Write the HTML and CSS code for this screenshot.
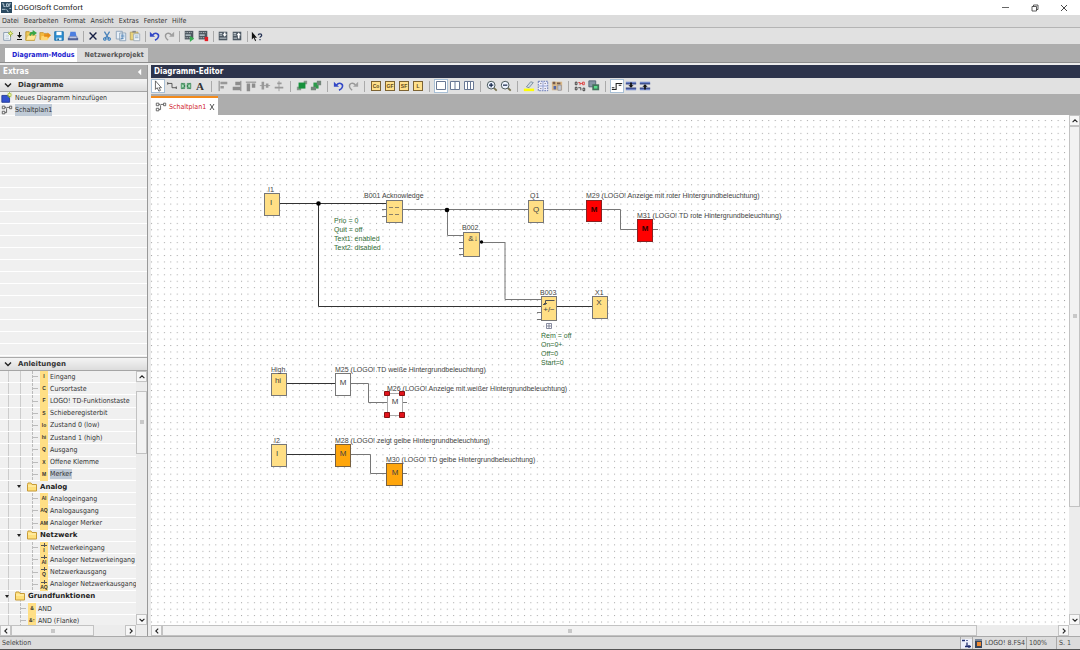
FILE: index.html
```html
<!DOCTYPE html>
<html lang="de">
<head>
<meta charset="utf-8">
<title>LOGO!Soft Comfort</title>
<link rel="stylesheet" href="styles.css">
</head>
<body>
<svg class="defs" aria-hidden="true">
  <symbol id="new" viewBox="0 0 14 14"><path d="M2 3h6l2 2v7H2z" fill="#f4f8fc" stroke="#7f93a8"/><path d="M4 6h4M4 8h4M4 10h4" stroke="#b9c8d6"/><path d="M10 1v7M7 4h6M8 2l4 4M12 2L8 6" stroke="#8fae1c"/><circle cx="10" cy="4" r="1.3" fill="#fbf59a"/></symbol>
  <symbol id="drop" viewBox="0 0 7 14"><path d="M3 3h1v3h2L3.500 9 1 6h2zM1 10h5v1H1z" fill="#111"/></symbol>
  <symbol id="open" viewBox="0 0 14 14"><path d="M1 2h4l1 1h5v9H1z" fill="#f1ca5c" stroke="#b58c25"/><path d="M3 6h10l-2 6H1z" fill="#ffe797" stroke="#c09a35" stroke-width=".6"/><path d="M5 6c0-3 2-4 4-4V0l5 3.500L9 7V5C8 5 7 5 7 7z" fill="#39a747"/></symbol>
  <symbol id="close" viewBox="0 0 14 14"><path d="M1 3h4l1 1h4v3L8 11H1z" fill="#f3b83e" stroke="#b98320" stroke-width=".7"/><path d="M3 7h10l-3 5H2z" fill="#ffd672"/><path d="M6 5h4V3l4 3-4 4V8H6z" fill="#e68a15"/></symbol>
  <symbol id="save" viewBox="0 0 14 14"><path d="M2 2h10v10H2z" fill="#2d8fd2" stroke="#146aa9"/><path d="M4 2h6v4H4z" fill="#fff"/><path d="M4 9h6v3H4z" fill="#d9effa"/><path d="M5 10h2v2H5z" fill="#235c88"/></symbol>
  <symbol id="print" viewBox="0 0 14 14"><path d="M4 2h6l1 5H3z" fill="#4d7fe0"/><path d="M2 7h10v4H2z" fill="#8a98c4"/><path d="M1 9h12v3H1z" fill="#526397"/><path d="M3 9h8" stroke="#dce4fb"/></symbol>
  <symbol id="del" viewBox="0 0 14 14"><path d="M3 3l8 8M11 3l-8 8" stroke="#172044" stroke-width="1.600"/></symbol>
  <symbol id="cut" viewBox="0 0 14 14"><path d="M4 2l5 8M10 2L5 10" stroke="#4b83b9" stroke-width="1.500"/><circle cx="4.500" cy="10.500" r="1.500" fill="none" stroke="#2572b9" stroke-width="1.200"/><circle cx="9.500" cy="10.500" r="1.500" fill="none" stroke="#2572b9" stroke-width="1.200"/></symbol>
  <symbol id="copy" viewBox="0 0 14 14"><path d="M1.500 1.500h7v9h-7zM5.500 3.500h7v9h-7z" fill="#e9f1f8" stroke="#879eb5"/><path d="M7 6h4M7 8h4M7 10h3" stroke="#4f86bd"/></symbol>
  <symbol id="paste" viewBox="0 0 14 14"><path d="M1.500 2.500h9v9h-9z" fill="#e8d27b" stroke="#b5a35d"/><path d="M4 1h4v2H4z" fill="#888"/><path d="M5.500 4.500h7v8h-7z" fill="#eef4f8" stroke="#9aa9b5"/><path d="M7 7h4M7 9h4" stroke="#88a6be"/></symbol>
  <symbol id="undo" viewBox="0 0 14 14"><path d="M4 6c3-4 8-2 7 2-.4 2-2 3-4 4" fill="none" stroke="#3348c6" stroke-width="1.800"/><path d="M1 2v6h6z" fill="#3348c6"/></symbol>
  <symbol id="redo" viewBox="0 0 14 14"><path d="M10 6C7 2 2 4 3 8c.4 2 2 3 3 4" fill="none" stroke="#999" stroke-width="1.600"/><path d="M13 2v6H7z" fill="#a2a2a2"/></symbol>
  <symbol id="dev" viewBox="0 0 14 14"><path d="M2 1h10v10H2z" fill="#4e5860"/><path d="M3 3h8M3 9h8" stroke="#d7dde1" stroke-dasharray="1 1"/><path d="M3 5h6v2H3z" fill="#a9b6be"/></symbol>
  <symbol id="start" viewBox="0 0 14 14"><use href="#dev"/><path d="M8 7l5 3-5 4z" fill="#36ad50"/></symbol>
  <symbol id="stop" viewBox="0 0 14 14"><use href="#dev"/><path d="M9 8h4v5H9z" fill="#e41b23"/></symbol>
  <symbol id="pcdown" viewBox="0 0 14 14"><path d="M2 2h10v10H2z" fill="#4d5863"/><path d="M3 4h3M3 6h3M3 9.500h8" stroke="#dbe3e8"/><path d="M8 3h2v2h1.500L9 8 6.500 5H8z" fill="#fff"/></symbol>
  <symbol id="pcup" viewBox="0 0 14 14"><path d="M2 2h10v10H2z" fill="#4d5863"/><path d="M3 4h3M3 6h3M3 9.500h4" stroke="#dbe3e8"/><path d="M8 10V6H6.500L9 3l2.500 3H10v4z" fill="#fff"/></symbol>
  <symbol id="help" viewBox="0 0 14 14"><path d="M1 2v9l2-2 2 4 1-1-2-3h3z" fill="#111"/><path d="M8.500 6c0-2 4-2 4 0 0 1.500-2 1.500-2 3M10.500 10.500V12" fill="none" stroke="#263354" stroke-width="1.400"/></symbol>
  <symbol id="arrow" viewBox="0 0 14 14"><path d="M4 1v10l2-2 2 4 2-1-2-3h3z" fill="#fff" stroke="#444" stroke-width=".9"/></symbol>
  <symbol id="wire" viewBox="0 0 14 14"><path d="M2 4h5v5h5M2 2.500v3M12 7.500v3" fill="none" stroke="#444"/></symbol>
  <symbol id="cutwire" viewBox="0 0 14 14"><path d="M1.500 4h4v6h-4zM8.500 4h4v6h-4z" fill="#a8dfb9" stroke="#3e8759"/><path d="M2 4l4 3-4 3M12 4L8 7l4 3" fill="none" stroke="#2d7b4a"/></symbol>
  <symbol id="al1" viewBox="0 0 14 14"><path d="M2.500 1v12" stroke="#777"/><path d="M4 2h8v3H4zM4 7h4v3H4z" fill="#999"/></symbol>
  <symbol id="al2" viewBox="0 0 14 14"><path d="M5 2h6v4H5zM2 8h9v4H2z" fill="#8d8d8d"/><path d="M11.500 1v12" stroke="#777"/></symbol>
  <symbol id="al3" viewBox="0 0 14 14"><path d="M1 2.500h12" stroke="#777"/><path d="M2 4h4v9H2zM8 4h4v5H8z" fill="#8d8d8d"/></symbol>
  <symbol id="al4" viewBox="0 0 14 14"><path d="M1 6.500h12" stroke="#999"/><path d="M3 2h3v9H3zM8 4h3v5H8z" fill="#999"/></symbol>
  <symbol id="al5" viewBox="0 0 14 14"><path d="M7 1v12" stroke="#999"/><path d="M5 3h5v2H5zM2 8h10v2H2z" fill="#999"/></symbol>
  <symbol id="front" viewBox="0 0 14 14"><path d="M1 8h5v4H1zM9 1h4v4H9z" fill="#89978b"/><path d="M3 3h8v7H3z" fill="#16913b"/></symbol>
  <symbol id="back" viewBox="0 0 14 14"><path d="M4 3h6v7H4z" fill="#2b9b49"/><path d="M1 8h6v4H1zM8 1h5v5H8z" fill="#73857a"/></symbol>
  <symbol id="w1" viewBox="0 0 12 12"><path d="M1.500 1.500h9v8h-9z" fill="#fff" stroke="#697894"/></symbol>
  <symbol id="w2" viewBox="0 0 12 12"><path d="M1.500 1.500h9v8h-9zM6 2v8" fill="#fff" stroke="#697894"/></symbol>
  <symbol id="w3" viewBox="0 0 12 12"><path d="M1.500 1.500h9v8h-9zM4.500 2v8M7.500 2v8" fill="#fff" stroke="#697894"/></symbol>
  <symbol id="zin" viewBox="0 0 14 14"><path d="M8.500 8.500l4 4" stroke="#77704c" stroke-width="2"/><circle cx="6" cy="6" r="4.500" fill="#eef4ff" stroke="#344"/><path d="M3.500 6h5M6 3.500v5" stroke="#124" stroke-width="1.400"/></symbol>
  <symbol id="zout" viewBox="0 0 14 14"><path d="M8.500 8.500l4 4" stroke="#77704c" stroke-width="2"/><circle cx="6" cy="6" r="4.500" fill="#eef4ff" stroke="#344"/><path d="M3.500 6h5" stroke="#124" stroke-width="1.400"/></symbol>
  <symbol id="mark" viewBox="0 0 14 14"><path d="M1 10h12v3H1z" fill="#ff0"/><path d="M4 8l5-6 3 1-5 6z" fill="#cdd9e4" stroke="#5d7285" stroke-width=".8"/></symbol>
  <symbol id="grid" viewBox="0 0 14 14"><path d="M1.500 1.500h11v11h-11z" fill="#eef" stroke="#5367a8" stroke-dasharray="2 1"/><path d="M7 2v10M2 7h10" stroke="#8d9bc8"/><path d="M4 4h1M9 4h1M4 10h1M9 10h1" stroke="#333"/></symbol>
  <symbol id="prop" viewBox="0 0 14 14"><path d="M1 2h12v10H1z" fill="#d9b98a"/><path d="M2 2h3v3H2zM7 3h4v2H7z" fill="#765b4b"/><path d="M3 7h3v4H3z" fill="#5367a8"/><path d="M8 6h4v6H8z" fill="#c4c9d2" stroke="#778" stroke-width=".6"/></symbol>
  <symbol id="net" viewBox="0 0 14 14"><path d="M1.500 2.500h2v3h-2zM1.500 8.500h2v3h-2zM10.500 9.500h2v3h-2z" fill="none" stroke="#333"/><path d="M5 3h2v3M10 2.500h2v3h-2zM7 4h3" fill="none" stroke="#d33"/><path d="M5 9h3v3" fill="none" stroke="#333"/></symbol>
  <symbol id="sim" viewBox="0 0 14 14"><path d="M1 1h8v7H1z" fill="#8695a5" stroke="#4f6070"/><path d="M5 5h8v7H5z" fill="#43745c"/><path d="M7 7h4v3H7z" fill="#57dd8a"/></symbol>
  <symbol id="step" viewBox="0 0 14 14"><path d="M1 11h5V4h7M1 9h3M9 6h3" fill="none" stroke="#222" stroke-width="1.200"/></symbol>
  <symbol id="pgdn" viewBox="0 0 14 14"><path d="M1 2h12v3H1zM1 9h12v3H1z" fill="#7186c9"/><path d="M1 4.500h12M1 9.500h12" stroke="#1c2b69"/><path d="M6 3h2v3h2L7 9 4 6h2z" fill="#111"/></symbol>
  <symbol id="pgup" viewBox="0 0 14 14"><path d="M1 2h12v3H1zM1 9h12v3H1z" fill="#7186c9"/><path d="M1 4.500h12M1 9.500h12" stroke="#1c2b69"/><path d="M6 11V8H4l3-3 3 3H8v3z" fill="#111"/></symbol>
  <symbol id="plan" viewBox="0 0 14 14"><path d="M1.500 2.500h3v3h-3zM1.500 8.500h3v3h-3zM10 2.500h2.500v3H10zM4.500 4h2M6.500 5v5h-2M7 4h3" fill="none" stroke="#555"/></symbol>
  <symbol id="addplan" viewBox="0 0 14 14"><path d="M1 4h9v8H1z" fill="#3352cf" stroke="#213891"/><path d="M10 0v7M7 3.500h6M8 1l4 5M12 1L8 6" stroke="#9dbd27"/><circle cx="10" cy="3.500" r="1.300" fill="#fff9a8"/></symbol>
  <symbol id="folder" viewBox="0 0 10 10"><path d="M.5 2.500V9h9V2.500H5L4 1H1z" fill="#ffe07b" stroke="#c79b38"/><path d="M1 4h8" stroke="#fff3bd"/></symbol>
  <symbol id="chev" viewBox="0 0 10 10"><path d="M2 3.500l3 3 3-3" fill="none" stroke="#222" stroke-width="1.400"/></symbol>
</svg>

<header class="titlebar">
  <svg class="applogo" viewBox="0 0 12 12"><path d="M0 0h12v12H0z" fill="#2b4a60"/><path d="M1 2h2v3h2M6 2h2v3H6zM9 5V2h2M1 8h4M6 8l2 3M9 7h2" fill="none" stroke="#bdd0dc"/></svg>
  <span class="apptitle">LOGO!Soft Comfort</span>
  <button class="win" aria-label="Minimieren"><svg viewBox="0 0 10 10"><path d="M1 4.500h7" stroke="#666"/></svg></button>
  <button class="win" aria-label="Wiederherstellen"><svg viewBox="0 0 10 10"><path d="M2 3.500h4.500V8H2zM3.500 3.500V2H8v4.500H6.500" fill="none" stroke="#333" stroke-width=".8"/></svg></button>
  <button class="win" aria-label="Schließen"><svg viewBox="0 0 10 10"><path d="M2 2l6 6M8 2L2 8" stroke="#333" stroke-width=".9"/></svg></button>
</header>
<nav class="menu"><button>Datei</button><button>Bearbeiten</button><button>Format</button><button>Ansicht</button><button>Extras</button><button>Fenster</button><button>Hilfe</button></nav>
<div class="tools main-tools">
  <button aria-label="Neu"><svg><use href="#new"/></svg></button><button class="narrow" aria-label="Neu Auswahl"><svg><use href="#drop"/></svg></button><button aria-label="Öffnen"><svg><use href="#open"/></svg></button><button aria-label="Datei schließen"><svg><use href="#close"/></svg></button><button aria-label="Speichern"><svg><use href="#save"/></svg></button><button aria-label="Drucken"><svg><use href="#print"/></svg></button><i></i><button aria-label="Löschen"><svg><use href="#del"/></svg></button><button aria-label="Ausschneiden"><svg><use href="#cut"/></svg></button><button aria-label="Kopieren"><svg><use href="#copy"/></svg></button><button aria-label="Einfügen"><svg><use href="#paste"/></svg></button><i></i><button aria-label="Rückgängig"><svg><use href="#undo"/></svg></button><button aria-label="Wiederholen"><svg><use href="#redo"/></svg></button><i></i><button aria-label="Start"><svg><use href="#start"/></svg></button><button aria-label="Stopp"><svg><use href="#stop"/></svg></button><i></i><button aria-label="PC zu LOGO"><svg><use href="#pcdown"/></svg></button><button aria-label="LOGO zu PC"><svg><use href="#pcup"/></svg></button><i></i><button aria-label="Kontexthilfe"><svg><use href="#help"/></svg></button>
</div>
<div class="modes"><button class="mode active">Diagramm-Modus</button><button class="mode">Netzwerkprojekt</button></div>

<main class="work">
  <aside class="side">
    <div class="extras"><span>Extras</span><svg viewBox="0 0 6 8"><path d="M5 0v8L1 4z" fill="#fff"/></svg></div>
    <h2 class="head"><svg><use href="#chev"/></svg>Diagramme</h2>
    <ul class="diagrams">
      <li><svg><use href="#addplan"/></svg><span>Neues Diagramm hinzufügen</span></li>
      <li><svg><use href="#plan"/></svg><span class="sel">Schaltplan1</span></li>
    </ul>
    <h2 class="head"><svg><use href="#chev"/></svg>Anleitungen</h2>
    <div class="treebox">
      <div class="treeview">
        <ul class="tree">
          <li class="leaf"><b>I</b><span>Eingang</span></li>
          <li class="leaf"><b>C</b><span>Cursortaste</span></li>
          <li class="leaf"><b>F</b><span>LOGO! TD-Funktionstaste</span></li>
          <li class="leaf"><b>S</b><span>Schieberegisterbit</span></li>
          <li class="leaf"><b>lo</b><span>Zustand 0 (low)</span></li>
          <li class="leaf"><b>hi</b><span>Zustand 1 (high)</span></li>
          <li class="leaf"><b>Q</b><span>Ausgang</span></li>
          <li class="leaf"><b>X</b><span>Offene Klemme</span></li>
          <li class="leaf"><b>M</b><span class="sel">Merker</span></li>
          <li class="group"><em></em><svg><use href="#folder"/></svg><span>Analog</span></li>
          <li class="leaf"><b>AI</b><span>Analogeingang</span></li>
          <li class="leaf"><b>AQ</b><span>Analogausgang</span></li>
          <li class="leaf"><b>AM</b><span>Analoger Merker</span></li>
          <li class="group"><em></em><svg><use href="#folder"/></svg><span>Netzwerk</span></li>
          <li class="leaf"><b class="net">I</b><span>Netzwerkeingang</span></li>
          <li class="leaf"><b class="net">AI</b><span>Analoger Netzwerkeingang</span></li>
          <li class="leaf"><b class="net">Q</b><span>Netzwerkausgang</span></li>
          <li class="leaf"><b class="net">AQ</b><span>Analoger Netzwerkausgang</span></li>
          <li class="group top"><em></em><svg><use href="#folder"/></svg><span>Grundfunktionen</span></li>
          <li class="leaf outer"><b>&amp;</b><span>AND</span></li>
          <li class="leaf outer"><b>&amp;↑</b><span>AND (Flanke)</span></li>
        </ul>
      </div>
      <div class="vbar"><button class="up" aria-label="Nach oben"><svg><use href="#chev"/></svg></button><div class="track"><div class="thumb thumb-tree"></div></div><button aria-label="Nach unten"><svg><use href="#chev"/></svg></button></div>
    </div>
    <div class="hbar"><button class="left" aria-label="Nach links"><svg><use href="#chev"/></svg></button><div class="track"><div class="thumb thumb-side"></div></div><button class="right" aria-label="Nach rechts"><svg><use href="#chev"/></svg></button></div>
  </aside>

  <section class="editor">
    <h1 class="edhead">Diagramm-Editor</h1>
    <div class="tools ed-tools">
      <button class="on" aria-label="Auswahl"><svg><use href="#arrow"/></svg></button><button aria-label="Verbinder"><svg><use href="#wire"/></svg></button><button aria-label="Schere"><svg><use href="#cutwire"/></svg></button><button class="serif">A</button><i></i><button aria-label="Links"><svg><use href="#al1"/></svg></button><button aria-label="Rechts"><svg><use href="#al2"/></svg></button><button aria-label="Oben"><svg><use href="#al3"/></svg></button><button aria-label="Mitte"><svg><use href="#al4"/></svg></button><button aria-label="Verteilen"><svg><use href="#al5"/></svg></button><i></i><button aria-label="Vordergrund"><svg><use href="#front"/></svg></button><button aria-label="Hintergrund"><svg><use href="#back"/></svg></button><i></i><button aria-label="Rückgängig"><svg><use href="#undo"/></svg></button><button aria-label="Wiederholen"><svg><use href="#redo"/></svg></button><i></i><button><span class="chip">Co</span></button><button><span class="chip">GF</span></button><button><span class="chip">SF</span></button><button><span class="chip">L</span></button><i></i><button class="on" aria-label="Ein Fenster"><svg><use href="#w1"/></svg></button><button aria-label="Zwei Fenster"><svg><use href="#w2"/></svg></button><button aria-label="Drei Fenster"><svg><use href="#w3"/></svg></button><i></i><button aria-label="Vergrößern"><svg><use href="#zin"/></svg></button><button aria-label="Verkleinern"><svg><use href="#zout"/></svg></button><i></i><button aria-label="Markieren"><svg><use href="#mark"/></svg></button><button aria-label="Raster"><svg><use href="#grid"/></svg></button><button aria-label="Eigenschaften"><svg><use href="#prop"/></svg></button><i></i><button aria-label="Umwandeln"><svg><use href="#net"/></svg></button><button aria-label="Simulation"><svg><use href="#sim"/></svg></button><i></i><button class="on" aria-label="Linien"><svg><use href="#step"/></svg></button><button aria-label="Seite ab"><svg><use href="#pgdn"/></svg></button><button aria-label="Seite auf"><svg><use href="#pgup"/></svg></button>
    </div>
    <div class="filetabs"><button class="filetab"><svg><use href="#plan"/></svg><span>Schaltplan1</span><svg class="x" viewBox="0 0 8 8"><path d="M2 1l4 6M6 1L2 7" stroke="#555"/></svg></button></div>
    <div class="canvasrow">
      <svg class="canvas">
        <defs>
          <pattern id="dots" width="6.430" height="6.430" patternUnits="userSpaceOnUse"><rect width="1" height="1" fill="#a4a4a4"/></pattern>
        </defs>
        <rect class="dotfield" width="100%" height="100%" fill="url(#dots)"/>
        <g transform="translate(-151 -115)">
          <g class="wires">
            <path d="M280 203.500h107M318.500 203.500v103H541M556 306.500h36M287 383.500h48M287 454.500h48"/>
            <path class="thin" d="M402 209.500h126M544 209.500h42M447.500 209.500v26H464M481 242.500h24v57h36M602 209.500h18.500v20H637M653 229.500h5M351 383.500h17.500v19H387M403 402.500h4M351 454.500h19.500v19H387M403 473.500h4"/>
            <path class="thin" d="M382 209.500h5M382 216.500h5M459 242.500h5M459 248.500h5M459 254.500h5M537 312.500h4M537 319.500h4"/>
            <circle cx="318.500" cy="203.500" r="2.300"/><circle cx="447" cy="210" r="2.300"/><circle cx="481.500" cy="242" r="1.700"/>
          </g>
          <g class="blocks">
            <rect x="264.500" y="193.500" width="15" height="22"/>
            <rect x="386.500" y="200.500" width="16" height="22"/>
            <rect x="463.500" y="232.500" width="16" height="24"/>
            <rect x="528.500" y="200.500" width="15" height="22"/>
            <rect class="red" x="586.500" y="200.500" width="15" height="21"/>
            <rect class="red" x="637.500" y="219.500" width="15" height="22"/>
            <rect x="541.500" y="296.500" width="15" height="24"/>
            <rect x="592.500" y="296.500" width="15" height="22"/>
            <rect x="271.500" y="373.500" width="15" height="22"/>
            <rect class="white" x="335.500" y="373.500" width="15" height="22"/>
            <rect class="white pale" x="387.500" y="393.500" width="15" height="22"/>
            <rect x="271.500" y="444.500" width="15" height="22"/>
            <rect class="orange" x="335.500" y="444.500" width="15" height="22"/>
            <rect class="orange" x="386.500" y="463.500" width="16" height="22"/>
          </g>
          <g class="symbols">
            <text x="271" y="205">I</text><text x="536" y="212">Q</text><text class="dark" x="594" y="212">M</text><text class="dark" x="645" y="231">M</text>
            <text x="473" y="241">&amp;↓</text><text x="549" y="312">+/−</text><text x="599" y="305">X</text><text x="278" y="383">hi</text>
            <text x="343" y="385">M</text><text x="395" y="404">M</text><text x="277" y="456">I</text><text x="343" y="456">M</text><text x="395" y="475">M</text>
            <path d="M389 207.500h4M395 207.500h4M389 214.500h4M395 214.500h4" stroke="#8a8069"/>
            <path d="M543 304.500h2.500v-4h9M544 303.500h3" fill="none" stroke="#555"/>
            <path d="M546.500 323.500h5v5h-5zM547 326h4M549 324v4" fill="#fff" stroke="#6a6f88" stroke-width=".8"/>
          </g>
          <g class="labels">
            <text x="268" y="192">I1</text><text x="364" y="198">B001 Acknowledge</text><text x="462" y="230">B002</text><text x="530" y="198">Q1</text>
            <text x="586" y="198">M29 (LOGO! Anzeige mit roter Hintergrundbeleuchtung)</text>
            <text x="637" y="218">M31 (LOGO! TD rote Hintergrundbeleuchtung)</text>
            <text x="540" y="295">B003</text><text x="595" y="295">X1</text><text x="271" y="372">High</text>
            <text x="335" y="372">M25 (LOGO! TD weiße Hintergrundbeleuchtung)</text>
            <text x="387" y="391">M26 (LOGO! Anzeige mit weißer Hintergrundbeleuchtung)</text>
            <text x="274" y="443">I2</text>
            <text x="335" y="443">M28 (LOGO! zeigt gelbe Hintergrundbeleuchtung)</text>
            <text x="386" y="462">M30 (LOGO! TD gelbe Hintergrundbeleuchtung)</text>
          </g>
          <g class="params">
            <text x="334" y="223">Prio = 0</text><text x="334" y="232">Quit = off</text><text x="334" y="241">Text1: enabled</text><text x="334" y="250">Text2: disabled</text>
            <text x="541" y="338">Rem = off</text><text x="541" y="347">On=0+</text><text x="541" y="356">Off=0</text><text x="541" y="365">Start=0</text>
          </g>
          <path class="handles" d="M384.500 391.500h5v4h-5zM399.500 391.500h5v4h-5zM384.500 412.500h5v5h-5zM399.500 412.500h5v5h-5z"/>
        </g>
      </svg>
      <div class="vbar"><button class="up" aria-label="Nach oben"><svg><use href="#chev"/></svg></button><div class="track"><div class="thumb thumb-v"></div></div><button aria-label="Nach unten"><svg><use href="#chev"/></svg></button></div>
    </div>
    <div class="hbar"><button class="left" aria-label="Nach links"><svg><use href="#chev"/></svg></button><div class="track"><div class="thumb thumb-h"></div></div><button class="right" aria-label="Nach rechts"><svg><use href="#chev"/></svg></button></div>
  </section>
</main>
<footer class="status">
  <span class="msg">Selektion</span>
  <span class="cell"><svg viewBox="0 0 11 11"><path d="M0 1h11v9H0z" fill="#eef1fb"/><path d="M1 2.500h3M6 2v1M6 4.500v4M4 8.500h6M8 7v3" stroke="#22306e" stroke-width="1.300"/></svg></span>
  <span class="cell device"><svg viewBox="0 0 11 11"><path d="M2 1h7v9H2z" fill="#38455b"/><path d="M4 4h4v4H4z" fill="#ef8a32"/><path d="M2 2h7" stroke="#c3ccd8"/></svg>LOGO! 8.FS4</span>
  <span class="cell zoom">100%</span>
  <span class="cell page">S. 1</span>
</footer>
</body>
</html>
```

FILE: styles.css
```css
* { box-sizing: border-box; }
body {
  margin: 0;
  height: 100vh;
  display: flex;
  flex-direction: column;
  overflow: hidden;
  background: #f0f0f0;
  color: #333;
  font: 7px/12px "DejaVu Sans Condensed", "DejaVu Sans", sans-serif;
}
button {
  margin: 0;
  padding: 0;
  border: 0;
  background: none;
  color: inherit;
  font: inherit;
}
ul { margin: 0; padding: 0; list-style: none; }
svg { display: block; flex: none; }
.defs { position: absolute; width: 0; height: 0; }

.titlebar { display: flex; align-items: center; height: 15px; background: #fff; padding-left: 1px; }
.applogo { width: 11px; height: 11px; }
.apptitle { flex: 1; padding-left: 2px; font: 8px/15px Roboto, sans-serif; color: #222; }
.win { width: 29px; display: flex; justify-content: center; }
.win:last-child { margin-right: 2px; }
.win svg { width: 10px; height: 10px; }

.menu { display: flex; gap: 5px; height: 13px; padding-left: 2px; background: #dcdcdc; border-bottom: 1px solid #b4b4b4; }

.tools { display: flex; align-items: center; background: #e1e1e1; }
.tools button { width: 14px; height: 14px; display: flex; align-items: center; justify-content: center; }
.tools svg { width: 12px; height: 12px; }
.tools i { width: 6px; height: 11px; background: linear-gradient(#aaa, #aaa) center / 1px 100% no-repeat; }
.main-tools { height: 16px; padding-left: 1px; }
.tools .narrow { width: 9px; }
.tools .narrow svg { width: 7px; height: 14px; }
.ed-tools { height: 16px; }
.ed-tools i { width: 9px; }
.tools .on { background: #fff; border: 1px solid #a9c0d6; }
.tools .serif { font: bold 11px/14px "Liberation Serif", serif; color: #333; }
.chip { width: 10px; height: 10px; border: 1px solid #7c6333; background: #ffe08b; font: bold 5px/8px "Liberation Sans", sans-serif; text-align: center; color: #604818; }

.modes { display: flex; align-items: flex-end; height: 18px; padding-left: 5px; background: #adadad; }
.mode { height: 14px; padding: 0 4px 0 8px; background: #ddd; font: bold 7px/14px "DejaVu Sans Condensed", sans-serif; color: #555; }
.mode.active { padding: 0 2px 0 7px; background: #fff; color: #2323cf; }

.work { flex: 1; min-height: 0; display: flex; gap: 3px; border-top: 1px solid #8d8d8d; padding-top: 2px; background: #ececec; }
.side { width: 148px; display: flex; flex-direction: column; border-right: 1px solid #999; }
.extras { display: flex; align-items: center; justify-content: space-between; height: 13px; padding: 0 5px 0 3px; background: #adadad; color: #fff; font-weight: bold; font-size: 8px; }
.extras svg { width: 5px; height: 8px; }
.head { display: flex; align-items: center; gap: 5px; height: 14px; margin: 0; padding-left: 3px; font: bold 7px/12px "DejaVu Sans", sans-serif; color: #333; background: linear-gradient(#f4f4f4, #dcdcdc); border-bottom: 1px solid #a5a5a5; border-top: 1px solid #aaa; }
.head svg { width: 10px; height: 10px; }
.diagrams { flex: 265; min-height: 0; background: repeating-linear-gradient(#f0f0f0 0 11px, #fff 11px 12px); }
.diagrams li { display: flex; align-items: center; height: 12px; gap: 2px; padding-left: 1px; }
.diagrams svg { width: 12px; height: 12px; }
.sel { background: #bfcad6; }
.treebox { flex: 254; min-height: 0; display: flex; }
.treeview { flex: 1; min-width: 0; overflow: hidden; background: #f0f0f0; }
.tree { height: 101%; display: grid; grid-template-rows: repeat(21, minmax(0, 1fr)); }
.tree li { display: flex; align-items: center; min-height: 0; border-bottom: 1px solid #fff; white-space: nowrap; line-height: 10px; background: linear-gradient(#ccc, #ccc) 8px 0 / 1px 100% no-repeat, linear-gradient(#ccc, #ccc) 20px 0 / 1px 100% no-repeat; }
.tree .leaf { padding-left: 32px; gap: 2px; }
.leaf::before { content: ""; width: 5px; align-self: stretch; border-left: 1px dashed #bbb; background: linear-gradient(#bbb, #bbb) 0 50% / 100% 1px no-repeat; }
.leaf b { width: 8px; align-self: stretch; margin: 0 0 -1px; background: #ffdf85; text-align: center; font: bold 5px/11px "Liberation Sans", sans-serif; }
.leaf .net { padding-top: 4px; line-height: 8px; background: linear-gradient(#555, #555) 50% 3px / 6px 1px no-repeat, linear-gradient(#555, #555) 50% 1px / 1px 4px no-repeat, #ffdf85; }
.tree .outer { padding-left: 20px; background: linear-gradient(#ccc, #ccc) 8px 0 / 1px 100% no-repeat; }
.tree .group { padding-left: 17px; gap: 3px; font: bold 7px/10px "DejaVu Sans", sans-serif; color: #222; }
.group svg { width: 10px; height: 10px; }
.group em { border: 2px solid transparent; border-top: 3px solid #222; border-bottom: 0; margin-right: 3px; }
.tree .top { padding-left: 5px; }

.vbar { width: 11px; display: flex; flex-direction: column; background: #ececec; }
.hbar { height: 11px; display: flex; padding-right: 11px; background: #ececec; }
.vbar button, .hbar button { width: 11px; height: 11px; display: flex; align-items: center; justify-content: center; border: 1px solid #c4c4c4; background: #f7f7f7; }
.vbar button svg, .hbar button svg { width: 8px; height: 8px; }
.up svg { transform: rotate(180deg); }
.left svg { transform: rotate(90deg); }
.right svg { transform: rotate(-90deg); }
.track { flex: 1; min-width: 0; min-height: 0; }
.thumb { border: 1px solid #c2c2c2; background: linear-gradient(#c8c8c8, #c8c8c8) center / 4px 4px no-repeat, #f2f2f2; }
.thumb-tree { height: 27%; margin-top: 9px; }
.thumb-side { width: 73%; height: 100%; }
.thumb-v { height: 78%; }
.thumb-h { width: 91%; height: 100%; }

.editor { flex: 1; min-width: 0; display: flex; flex-direction: column; }
.edhead { height: 13px; margin: 0; padding-left: 3px; background: #2d344c; color: #fff; font: bold 8px/13px "DejaVu Sans Condensed", sans-serif; }
.filetabs { height: 21px; padding-top: 2px; background: #adadad; }
.filetab { height: 19px; padding: 0 2px 0 4px; display: flex; align-items: center; gap: 2px; border-top: 2px solid #f28a1c; background: #fff; color: #d0202a; }
.filetab svg { width: 12px; height: 12px; }
.filetab .x { width: 8px; height: 8px; }
.canvasrow { flex: 1; min-height: 0; display: flex; }
.canvas { flex: 1; min-width: 0; height: 100%; background: #fff; font-family: "Liberation Sans", sans-serif; }
.dotfield { transform: translate(0px, 5px); }
.wires path { fill: none; stroke: #333; }
.wires .thin { stroke: #777; }
.wires circle { fill: #000; }
.blocks rect { fill: #ffdf85; stroke: #777; }
.blocks .red { fill: #f00; stroke: #822; }
.blocks .orange { fill: #ffa60c; stroke: #776040; }
.blocks .white { fill: #fff; }
.blocks .pale { stroke: #aaa; }
.symbols { font-size: 8px; text-anchor: middle; fill: #444; }
.symbols .dark { fill: #300; font-weight: bold; }
.labels { font-size: 7px; fill: #444; }
.params { font-size: 7px; fill: #2f6b35; }
.handles { fill: #e3131b; stroke: #811; }

.status { display: flex; height: 14px; border-top: 1px solid #aaa; border-bottom: 1px solid #555; background: #dcdcdc; color: #444; }
.msg { flex: 1; padding-left: 2px; }
.cell { display: flex; align-items: center; border-left: 1px solid #aaa; }
.cell svg { width: 11px; height: 11px; }
.device { gap: 1px; width: 54px; white-space: nowrap; }
.zoom { width: 30px; padding-left: 2px; }
.page { width: 24px; padding-left: 2px; }
```
